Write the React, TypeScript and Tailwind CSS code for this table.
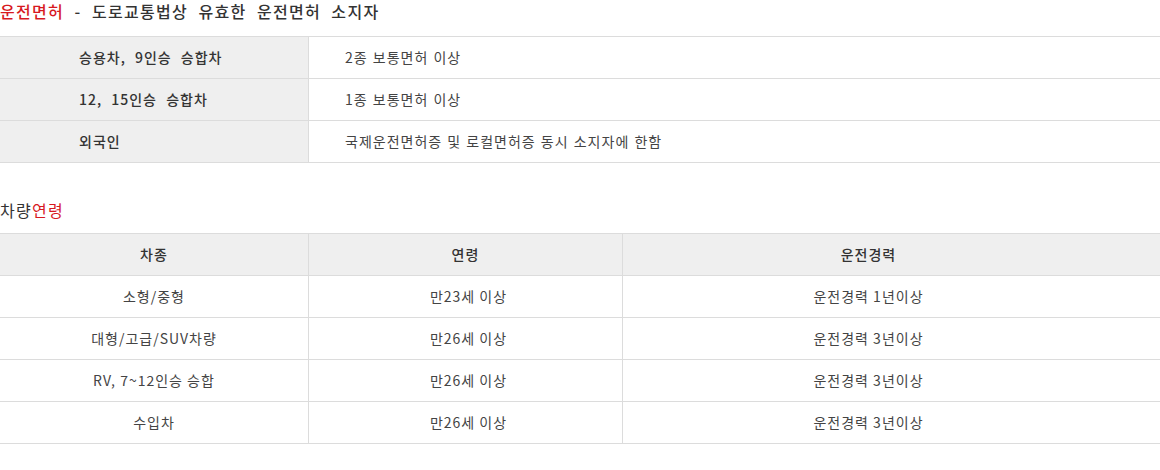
const licenseRows = [
  { label: "승용차, 9인승 승합차", value: "2종 보통면허 이상" },
  { label: "12, 15인승 승합차", value: "1종 보통면허 이상" },
  { label: "외국인", value: "국제운전면허증 및 로컬면허증 동시 소지자에 한함" },
];

const ageRows = [
  { type: "소형/중형", age: "만23세 이상", career: "운전경력 1년이상" },
  { type: "대형/고급/SUV차량", age: "만26세 이상", career: "운전경력 3년이상" },
  { type: "RV, 7~12인승 승합", age: "만26세 이상", career: "운전경력 3년이상" },
  { type: "수입차", age: "만26세 이상", career: "운전경력 3년이상" },
];

export default function App() {
  return (
    <div
      className="w-[1160px] h-[470px] bg-white text-[#333]"
      style={{ fontFamily: '"Noto Sans CJK KR", "Noto Sans", sans-serif' }}
    >
      {/* 운전면허 */}
      <div className="h-[36px]">
        <h3 className="text-[16px] leading-[22px] font-medium tracking-[1.3px] [word-spacing:5.5px]">
          <span className="text-[#d7191f]">운전면허</span> - 도로교통법상 유효한 운전면허 소지자
        </h3>
      </div>
      <div className="border-t border-[#dcdcdc]">
        {licenseRows.map((row) => (
          <div key={row.label} className="grid grid-cols-[309px_1fr] h-[42px] border-b border-[#dcdcdc]">
            <div className="flex items-center pl-[79px] bg-[#efefef] border-r border-[#dcdcdc] text-[14px] font-medium text-[#333] tracking-[1px] [word-spacing:5px]">
              {row.label}
            </div>
            <div className="flex items-center pl-[36px] text-[14px] text-[#444] tracking-[1px] [word-spacing:1px]">
              {row.value}
            </div>
          </div>
        ))}
      </div>

      {/* 차량연령 */}
      <div className="pt-[36px] pb-[12px]">
        <h3 className="text-[16px] leading-[22px] tracking-[1.3px]">
          차량<span className="text-[#d7191f]">연령</span>
        </h3>
      </div>
      <div className="border-t border-[#dcdcdc]">
        <div className="grid grid-cols-[309px_314px_1fr] h-[42px] bg-[#efefef] border-b border-[#dcdcdc] text-[14px] font-medium text-[#333] tracking-[1px]">
          <div className="flex items-center justify-center border-r border-[#dcdcdc]">차종</div>
          <div className="flex items-center justify-center border-r border-[#dcdcdc]">연령</div>
          <div className="flex items-center justify-center pr-[46px]">운전경력</div>
        </div>
        {ageRows.map((row) => (
          <div
            key={row.type}
            className="grid grid-cols-[309px_314px_1fr] h-[42px] border-b border-[#dcdcdc] text-[14px] text-[#444] tracking-[1px]"
          >
            <div className="flex items-center justify-center border-r border-[#dcdcdc]">{row.type}</div>
            <div className="flex items-center justify-center pl-[6px] border-r border-[#dcdcdc]">{row.age}</div>
            <div className="flex items-center justify-center pr-[46px]">{row.career}</div>
          </div>
        ))}
      </div>
    </div>
  );
}
